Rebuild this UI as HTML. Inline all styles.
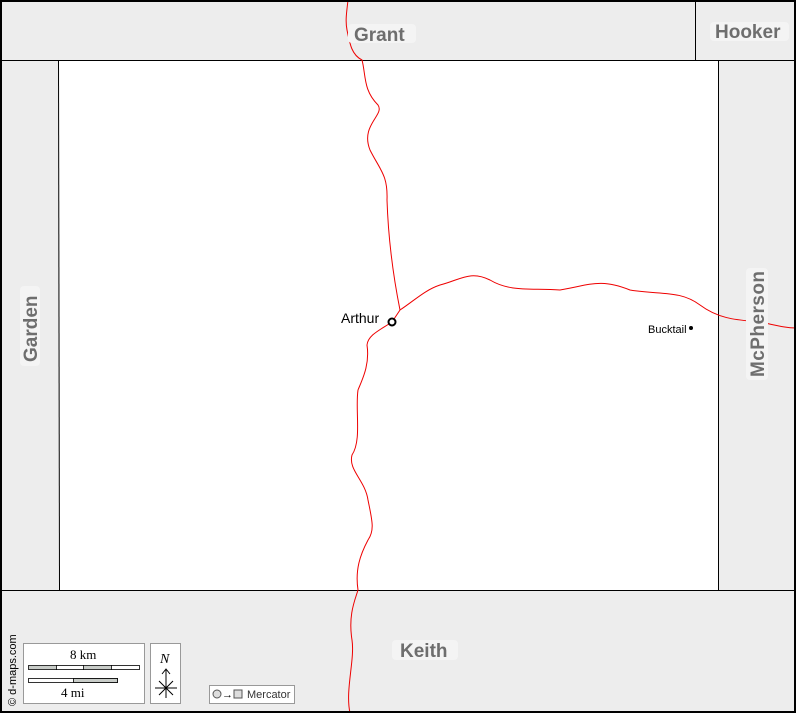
<!DOCTYPE html>
<html><head><style>
body{margin:0;width:796px;height:713px;overflow:hidden;background:#fff}
svg{display:block}
text{font-family:"Liberation Sans",sans-serif}
.lbl{font-weight:bold;font-size:19px;fill:#6e6e6e}
</style></head><body>
<svg width="796" height="713" viewBox="0 0 796 713">
<rect x="0" y="0" width="796" height="713" fill="#ededed"/>
<polygon points="58,60 718,60 718,590 59,590" fill="#fff"/>
<g stroke="#000" stroke-width="1" fill="none">
<line x1="0" y1="60.5" x2="796" y2="60.5"/>
<line x1="0" y1="590.5" x2="796" y2="590.5"/>
<line x1="58.5" y1="60" x2="59.5" y2="590"/>
<line x1="718.5" y1="60" x2="718.5" y2="590"/>
<line x1="695.5" y1="0" x2="695.5" y2="60"/>
</g>
<g stroke="#e00" stroke-width="1" fill="none">
<path d="M348,0 C347,10 345,20 347,30 C350,45 352,55 362,60 C366,75 363,90 378,105 C385,115 360,125 370,150 C380,170 388,175 387,200 C388,230 392,270 400,310 L392,322 C380,330 368,335 367,345 C370,365 362,380 358,390 C355,410 362,440 352,455 C348,470 365,480 368,500 C372,520 375,530 368,540 C360,555 355,570 358,590 C355,600 348,615 352,640 C355,660 345,690 350,713"/>
<path d="M400,310 C415,300 425,290 440,285 C460,280 470,270 490,280 C510,292 530,288 560,290 C590,285 600,278 630,290 C660,295 680,290 700,305 C720,320 740,320 760,322 C775,325 785,328 796,328"/>
</g>
<rect x="348" y="24" width="68" height="19" rx="4" fill="#f4f4f4"/>
<text x="354" y="41" class="lbl">Grant</text>
<rect x="710" y="22" width="79" height="19" rx="4" fill="#f4f4f4"/>
<text x="715" y="38" class="lbl">Hooker</text>
<rect x="392" y="640" width="66" height="20" rx="4" fill="#f4f4f4"/>
<text x="400" y="657" class="lbl">Keith</text>
<rect x="20" y="286" width="20" height="80" rx="4" fill="#f4f4f4"/>
<text class="lbl" transform="translate(37,362) rotate(-90)">Garden</text>
<rect x="746" y="268" width="22" height="112" rx="4" fill="#f4f4f4"/>
<text class="lbl" transform="translate(764,377) rotate(-90)" textLength="106">McPherson</text>
<circle cx="392" cy="322" r="3.5" fill="#fff" stroke="#000" stroke-width="2"/>
<text x="341" y="323" font-size="14" fill="#000">Arthur</text>
<circle cx="691" cy="328" r="2" fill="#000"/>
<text x="648" y="333" font-size="11" fill="#000">Bucktail</text>
<text transform="translate(16,706) rotate(-90)" font-size="11" fill="#000">© d-maps.com</text>
<rect x="23.5" y="643.5" width="121" height="60" fill="#fff" stroke="#999"/>
<text x="70" y="659" font-size="13" fill="#000" style="font-family:'Liberation Serif',serif">8 km</text>
<rect x="28.5" y="665.5" width="111" height="4" fill="#fff" stroke="#000" stroke-width="0.8"/>
<rect x="29" y="666" width="27" height="3" fill="#c8ccc8"/>
<rect x="84" y="666" width="27" height="3" fill="#c8ccc8"/>
<path d="M56.5,665 v5 M83.5,665 v5 M111.5,665 v5" stroke="#000" stroke-width="0.8"/>
<rect x="28.5" y="678.5" width="89" height="4" fill="#fff" stroke="#000" stroke-width="0.8"/>
<rect x="73.5" y="678.5" width="44" height="4" fill="#c8ccc8" stroke="#000" stroke-width="0.8"/>
<text x="61" y="697" font-size="13" fill="#000" style="font-family:'Liberation Serif',serif">4 mi</text>
<rect x="150.5" y="643.5" width="30" height="60" fill="#fff" stroke="#999"/>
<text x="160" y="663" font-size="14" font-style="italic" fill="#000" style="font-family:'Liberation Serif',serif">N</text>
<g stroke="#000" stroke-width="1" fill="none">
<path d="M166,670 V698 M162,674 L166,669 L170,674 M155,688 H177 M159,681 L173,695 M173,681 L159,695"/>
</g>
<rect x="209.5" y="685.5" width="85" height="18" fill="#fff" stroke="#999"/>
<circle cx="217" cy="694" r="4" fill="#ddd" stroke="#555"/>
<text x="222" y="698" font-size="11" fill="#000">→</text>
<rect x="234" y="690" width="8" height="8" fill="#ddd" stroke="#555"/>
<text x="247" y="698" font-size="11" fill="#333">Mercator</text>
<rect x="1" y="1" width="794" height="711" fill="none" stroke="#000" stroke-width="2"/>
</svg>
</body></html>
